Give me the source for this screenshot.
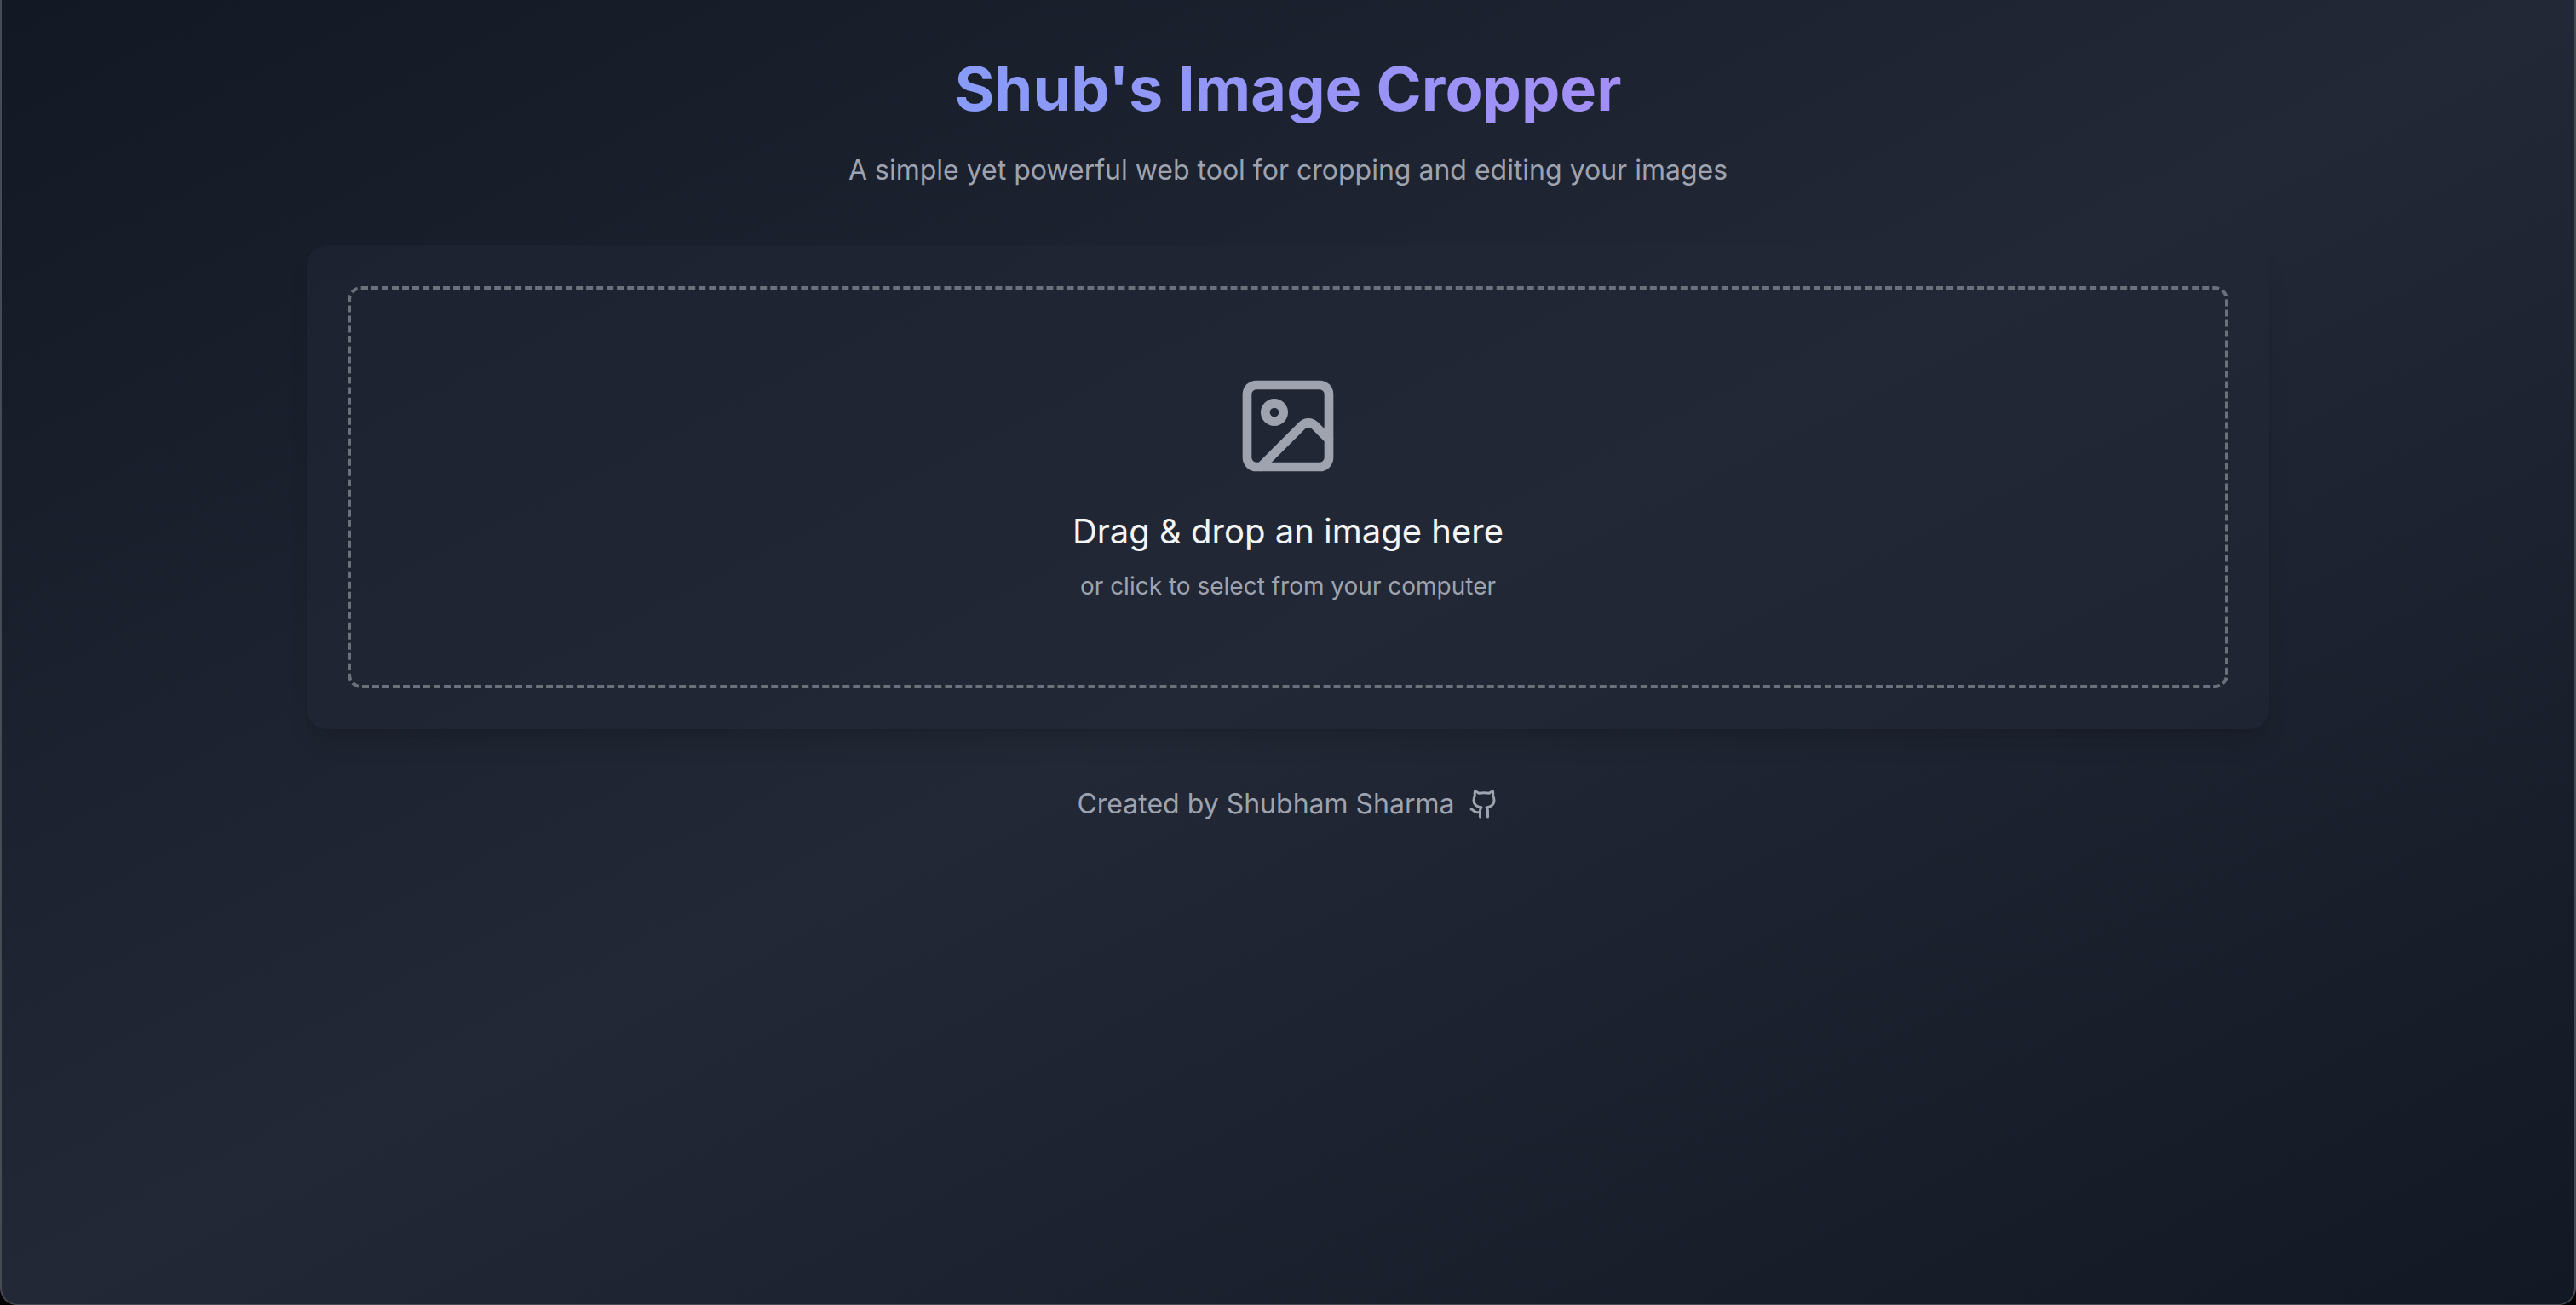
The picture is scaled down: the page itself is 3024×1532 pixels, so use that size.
<main class="page">
  <div class="container">
    <header>
      <h1>Shub's Image Cropper</h1>
      <p>A simple yet powerful web tool for cropping and editing your images</p>
    </header>
    <section class="card">
      <button class="dropzone" type="button">
        <svg class="picture" viewBox="0 0 24 24" aria-hidden="true">
          <rect width="18" height="18" x="3" y="3" rx="2" />
          <circle cx="9" cy="9" r="2" />
          <path d="m21 15-3.086-3.086a2 2 0 0 0-2.828 0L6 21" />
        </svg>
        <span class="lead">Drag &amp; drop an image here</span>
        <span class="hint">or click to select from your computer</span>
      </button>
    </section>
    <footer>
      <span>Created by Shubham Sharma</span>
      <a href="https://github.com" aria-label="GitHub">
        <svg viewBox="0 0 24 24" aria-hidden="true">
          <path d="M15 22v-4a4.800 4.800 0 0 0-1-3.500c3 0 6-2 6-5.500.08-1.250-.27-2.480-1-3.500.28-1.150.28-2.350 0-3.500 0 0-1 0-3 1.500-2.640-.5-5.360-.5-8 0C6 2 5 2 5 2c-.3 1.150-.3 2.350 0 3.500A5.403 5.403 0 0 0 4 9c0 3.500 3 5.500 6 5.500-.39.49-.68 1.050-.85 1.650-.17.6-.22 1.230-.15 1.850v4" />
          <path d="M9 18c-4.510 2-5-2-7-2" />
        </svg>
      </a>
    </footer>
  </div>
</main>

<style>
  :global(body) {
    margin: 0;
    background: #000;
  }

  .page {
    box-sizing: border-box;
    min-height: 100vh;
    padding: 64px 32px;
    border: solid #474b56;
    border-width: 0 2px 1px;
    border-radius: 0 0 20px 20px;
    background: linear-gradient(to bottom right, #131825, #222835, #131825) border-box;
    font-family: Inter, sans-serif;
    color: #9ea3af;
  }

  .container {
    max-width: 2304px;
    margin: 0 auto;
  }

  header {
    margin-bottom: 64px;
    text-align: center;
  }

  h1 {
    width: fit-content;
    margin: 0 auto 32px;
    font-size: 72px;
    line-height: 80px;
    font-weight: 700;
    color: transparent;
    background: linear-gradient(to right, #889bf7, #a38ff6);
    background-clip: text;
  }

  p {
    margin: 0;
    font-size: 32px;
    line-height: 48px;
  }

  .card {
    padding: 48px;
    border-radius: 24px;
    background: rgba(34, 40, 53, 0.5);
    box-shadow: 0 20px 30px -6px rgba(0, 0, 0, 0.1), 0 8px 12px -8px rgba(0, 0, 0, 0.1);
  }

  .dropzone {
    box-sizing: border-box;
    display: flex;
    flex-direction: column;
    align-items: center;
    width: 100%;
    padding: 96px;
    border: 4px dashed #6c707b;
    border-radius: 16px;
    background: transparent;
    font: inherit;
    color: inherit;
    cursor: pointer;
  }

  svg {
    display: block;
    fill: none;
    stroke: currentColor;
    stroke-width: 2;
    stroke-linecap: round;
    stroke-linejoin: round;
  }

  .picture {
    width: 128px;
    height: 128px;
    margin-bottom: 32px;
  }

  .lead {
    margin-bottom: 16px;
    font-size: 40px;
    line-height: 56px;
    color: #f3f4f6;
  }

  .hint {
    font-size: 28px;
    line-height: 40px;
  }

  footer {
    display: flex;
    justify-content: center;
    align-items: center;
    gap: 16px;
    margin-top: 64px;
    font-size: 32px;
    line-height: 48px;
  }

  footer a {
    color: inherit;
  }

  footer svg {
    width: 36px;
    height: 36px;
  }
</style>
